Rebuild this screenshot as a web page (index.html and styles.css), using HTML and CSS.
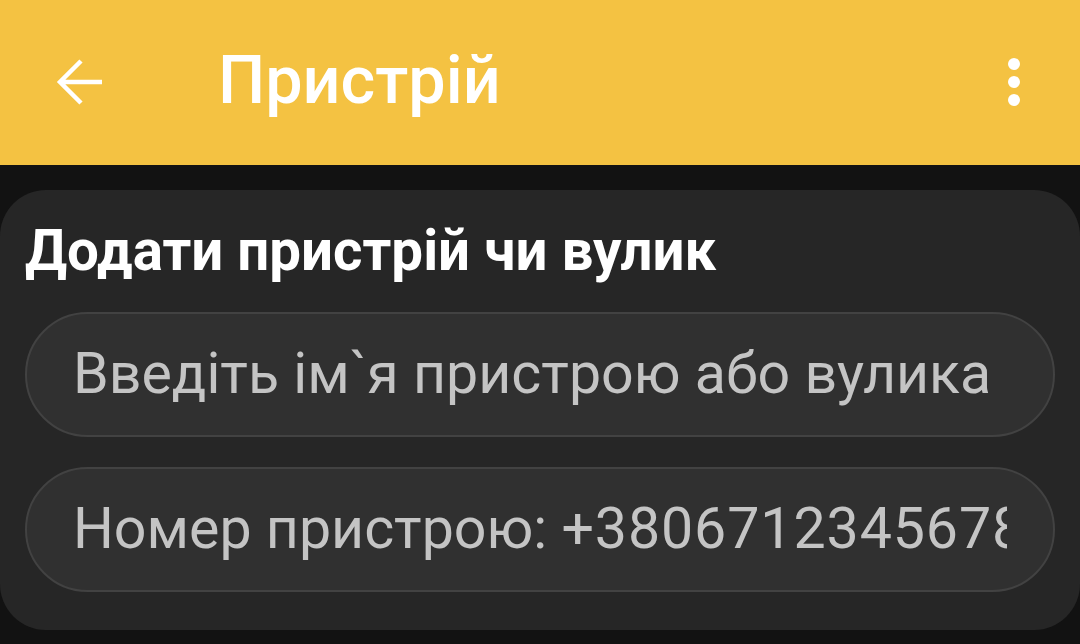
FILE: index.html
```html
<!DOCTYPE html>
<html lang="uk">
<head>
<meta charset="utf-8">
<link rel="stylesheet" href="styles.css">
</head>
<body>
<header class="appbar">
  <svg class="back" width="48" height="48" viewBox="0 0 48 48">
    <path d="M46 24H5M25 3L4 24l21 21" fill="none" stroke="#fff" stroke-width="4.5" stroke-linecap="butt" stroke-linejoin="miter"/>
  </svg>
  <h1 class="title">Пристрій</h1>
  <svg class="menu" width="14" height="50" viewBox="0 0 14 50">
    <circle cx="7" cy="7" r="6" fill="#fff"/>
    <circle cx="7" cy="25" r="6" fill="#fff"/>
    <circle cx="7" cy="43" r="6" fill="#fff"/>
  </svg>
</header>
<main class="content">
  <section class="card">
    <h2 class="card-title">Додати пристрій чи вулик</h2>
    <div class="field"><span class="placeholder">Введіть ім`я пристрою або вулика</span></div>
    <div class="field"><span class="placeholder">Номер пристрою: <span class="num">+380671234567890</span></span></div>
  </section>
</main>
</body>
</html>
```

FILE: styles.css
```css
* { box-sizing: border-box; }
html, body {
  margin: 0;
  padding: 0;
  background: #121212;
  font-family: Roboto, "Noto Sans", sans-serif;
  width: 1080px;
  height: 644px;
  overflow: hidden;
}
.appbar {
  height: 165px;
  background: #f4c242;
  display: flex;
  align-items: center;
  padding: 0 0 0 56px;
}
.back {
  flex: none;
  margin-top: -2px;
}
.title {
  margin: 0 0 0 114px;
  font-weight: 500;
  font-size: 66.5px;
  color: #fff;
  flex: 1;
  line-height: 1;
  margin-top: -4px;
}
.menu {
  flex: none;
  margin-right: 59px;
  margin-top: -2px;
}
.content {
  padding-top: 25px;
}
.card {
  background: #262626;
  border-radius: 46px;
  height: 440px;
  padding: 28px 25px 0 25px;
}
.card-title {
  margin: 0 0 28px 0;
  font-size: 56.5px;
  font-weight: 700;
  color: #fff;
  line-height: 66px;
}
.field {
  height: 125px;
  border: 2px solid #424242;
  background: #303030;
  border-radius: 63px;
  margin-bottom: 30px;
  display: flex;
  align-items: center;
  padding: 0 46px;
  overflow: hidden;
  white-space: nowrap;
}
.placeholder {
  flex: 1 1 auto;
  min-width: 0;
  font-size: 57.3px;
  color: #c4c4c4;
  overflow: hidden;
  display: block;
  margin-top: -2px;
}
.num {
  letter-spacing: 0.9px;
}
```
